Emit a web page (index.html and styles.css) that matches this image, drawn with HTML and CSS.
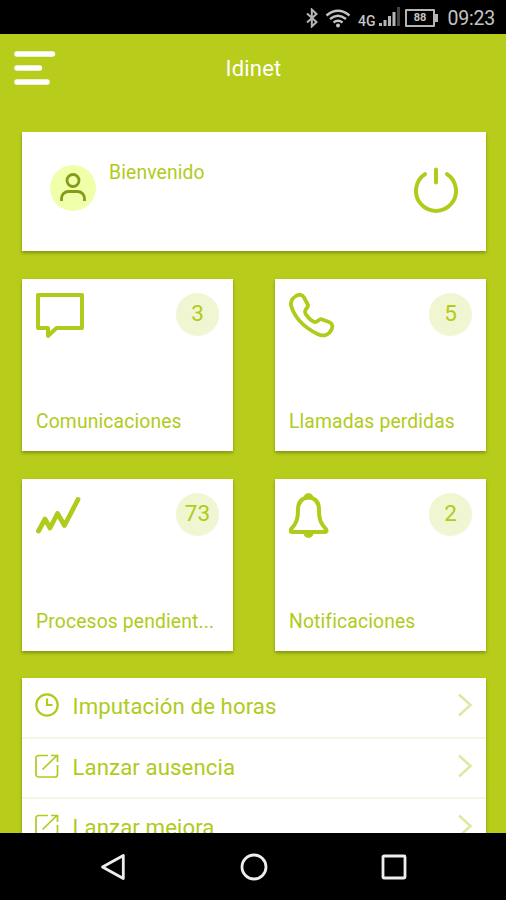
FILE: index.html
```html
<!DOCTYPE html>
<html lang="es">
<head>
<meta charset="utf-8">
<title>Idinet</title>
<link rel="stylesheet" href="styles.css">
</head>
<body>
<div class="phone">
  <div class="status">
    <svg class="bluetooth" width="14" height="20" viewBox="0 0 14 20"><path d="M2 5.500l9.500 8.500-4.700 4.500v-17L11.500 6 2 14.500"/></svg>
    <svg class="wifi" width="26" height="19" viewBox="0 0 26 19"><path d="M1.500 6.500Q13-3 24.500 6.500M5 10Q13 3.500 21 10M8.500 13.500Q13 10 17.500 13.500"/><circle cx="13" cy="16.500" r="2"/></svg>
    <span class="network">4G</span>
    <svg class="signal" width="22" height="20" viewBox="0 0 22 20"><path d="M0 16h3v3H0zM4.500 13h3v6h-3zM9 9h3v10H9zM13.500 5h3v14h-3z"/><path class="weak" d="M18 0h3v19h-3z"/></svg>
    <span class="battery">88</span>
    <span class="time">09:23</span>
  </div>

  <header class="header">
    <svg class="menu" width="42" height="34" viewBox="0 0 42 34"><path d="M3 3H38.500M3 17H25.500M3 31H33"/></svg>
    <h1 class="title">Idinet</h1>
  </header>

  <main class="content">
    <section class="card welcome">
      <div class="avatar"><svg width="28" height="30" viewBox="0 0 28 30"><circle cx="14" cy="7.500" r="6"/><path d="M2.500 28v-2.500a7 7 0 0 1 7-7h9a7 7 0 0 1 7 7V28"/></svg></div>
      <span class="greeting">Bienvenido</span>
      <svg class="power" width="46" height="46" viewBox="0 0 46 46"><path d="M12 7.200a20 20 0 1 0 22 0M23 2.500v13"/></svg>
    </section>

    <div class="tiles">
      <section class="card tile">
        <div class="tile-top"><svg class="icon" width="48" height="46" viewBox="0 0 48 46"><path d="M2 2h44v33H20.500L12 43v-8H2z"/></svg><span class="badge">3</span></div>
        <span class="label">Comunicaciones</span>
      </section>
      <section class="card tile">
        <div class="tile-top"><svg class="icon phone-icon" width="48" height="46" viewBox="0 0 48 46"><path d="M7 3C10 1 13.500 1.500 15 4.500l4 7.500c1 2-3 3.500-3 6.500 0 3.500 7 10.500 10.500 10.500 3 0 3.500-3.500 6-2.700l7.500 2.700c3.500 1.300 4 4.500 2.500 7.500-2.500 5.500-8 7.500-14 4.500C15.500 34.500 6.500 26 2.500 14 1 9.500 3 5.500 7 3z"/></svg><span class="badge">5</span></div>
        <span class="label">Llamadas perdidas</span>
      </section>
      <section class="card tile">
        <div class="tile-top"><svg class="icon chart" width="48" height="46" viewBox="0 0 48 46"><path d="M2.500 38L9 26l5 9 7.500-14.500 7 12L42 6.500"/></svg><span class="badge">73</span></div>
        <span class="label">Procesos pendient...</span>
      </section>
      <section class="card tile">
        <div class="tile-top"><svg class="icon" width="48" height="46" viewBox="0 0 48 46"><path d="M19.500 4.500C12 5 9 10 9 17c0 12-3.500 15-6.500 18.500-2 2.500-.8 3.500 1.200 3.500h31.600c2 0 3.200-1 1.200-3.500C33.500 32 30 29 30 17c0-7-3-12-10.500-12.500z"/><path class="solid" d="M14.500 5.500a5 5.500 0 0 1 10 0M14.500 40a5 5 0 0 0 10 0z"/></svg><span class="badge">2</span></div>
        <span class="label">Notificaciones</span>
      </section>
    </div>

    <ul class="card actions">
      <li class="action"><svg class="small-icon clock" width="24" height="24" viewBox="0 0 24 24"><circle cx="12" cy="12" r="10.700"/><path d="M12 5.500V12h5.500"/></svg><span class="action-label">Imputación de horas</span><svg class="chevron" width="16" height="24" viewBox="0 0 16 24"><path d="M2 1.500L13.500 12 2 22.500"/></svg></li>
      <li class="action"><svg class="small-icon" width="24" height="24" viewBox="0 0 24 24"><path d="M13 1.500H3.500A2.500 2.500 0 0 0 1 4v16.500A2.500 2.500 0 0 0 3.500 23h16.500a2.500 2.500 0 0 0 2.500-2.500V11M7.500 15.500L22 1.500M16 1.500h6.500V8"/></svg><span class="action-label">Lanzar ausencia</span><svg class="chevron" width="16" height="24" viewBox="0 0 16 24"><path d="M2 1.500L13.500 12 2 22.500"/></svg></li>
      <li class="action"><svg class="small-icon" width="24" height="24" viewBox="0 0 24 24"><path d="M13 1.500H3.500A2.500 2.500 0 0 0 1 4v16.500A2.500 2.500 0 0 0 3.500 23h16.500a2.500 2.500 0 0 0 2.500-2.500V11M7.500 15.500L22 1.500M16 1.500h6.500V8"/></svg><span class="action-label">Lanzar mejora</span><svg class="chevron" width="16" height="24" viewBox="0 0 16 24"><path d="M2 1.500L13.500 12 2 22.500"/></svg></li>
    </ul>
  </main>

  <nav class="navbar">
    <svg width="28" height="28" viewBox="0 0 28 28"><path d="M24.300 2.500v23L3.500 14z"/></svg>
    <svg width="28" height="28" viewBox="0 0 28 28"><circle cx="14" cy="14" r="12"/></svg>
    <svg width="28" height="28" viewBox="0 0 28 28"><rect x="3" y="3" width="22" height="22" rx="1"/></svg>
  </nav>
</div>
</body>
</html>
```
FILE: styles.css
```css
* { box-sizing: border-box; }
body { margin: 0; font-family: Roboto, "Liberation Sans", sans-serif; background: #000; }
svg { display: block; flex: none; fill: none; }
.phone { width: 506px; height: 900px; display: flex; flex-direction: column; overflow: hidden; background: #b8cc1b; color: #b0cb1b; }

.status { height: 34px; flex: none; display: flex; align-items: center; padding: 2px 11px 0 305px; background: #000; color: #c4c4c4; }
.bluetooth { stroke: #b5b5b5; stroke-width: 2; }
.wifi { margin-left: 6px; stroke: #c4c4c4; stroke-width: 2.400; }
.wifi circle { fill: #c4c4c4; stroke: none; }
.network { width: 19px; margin: 6px 0 0 7px; font-size: 14px; font-weight: 500; line-height: 16px; }
.signal { margin: -2px 0 0 2px; fill: #b5b5b5; }
.signal .weak { fill: #444; }
.battery { position: relative; width: 30px; height: 18px; margin-left: 4px; border: 2px solid #b5b5b5; border-radius: 1px; font-size: 11px; font-weight: 700; line-height: 14px; text-align: center; }
.battery::after { content: ""; position: absolute; left: 28px; top: 3px; width: 3px; height: 8px; background: #b5b5b5; }
.time { margin: 2px 0 0 auto; font-size: 19.500px; line-height: 24px; letter-spacing: -0.2px; white-space: nowrap; }

.header { height: 98px; flex: none; display: grid; grid-template-columns: 100px 1fr 100px; padding-top: 17px; color: #fff; }
.menu { margin-left: 14px; stroke: #fff; stroke-width: 5.500; stroke-linecap: round; }
.title { margin: 4px 0 0 1px; font-size: 22px; font-weight: 400; line-height: 28px; letter-spacing: .2px; text-align: center; }

.content { flex: 1; min-height: 0; padding: 0 20px 0 22px; overflow: hidden; }
.card { background: #fff; box-shadow: 0 2px 3px rgba(80, 95, 0, .5); }
.welcome { height: 119px; display: flex; padding: 0 27px 0 28px; }
.avatar { width: 46px; height: 46px; margin-top: 33px; border-radius: 50%; background: #efffaa; display: grid; place-items: center; }
.avatar svg { stroke: #849a19; stroke-width: 2.800; }
.greeting { margin: 29px 0 0 13px; font-size: 19.300px; line-height: 24px; letter-spacing: .15px; }
.power { margin: 35px 0 0 auto; stroke: #b0cb1b; stroke-width: 4; stroke-linecap: round; }

.tiles { display: grid; grid-template-columns: 211px 211px; justify-content: space-between; row-gap: 28px; margin: 28px 0 27px; }
.tile { height: 172px; display: flex; flex-direction: column; justify-content: space-between; padding: 14px 14px 17px; }
.tile-top { display: flex; justify-content: space-between; }
.icon { stroke: #b0cb1b; stroke-width: 4; stroke-linejoin: round; stroke-linecap: round; }
.phone-icon { stroke-width: 3.800; }
.chart { stroke-width: 4.800; }
.solid { fill: #b0cb1b; stroke: none; }
.badge { width: 43px; height: 43px; border-radius: 50%; background: #f0f5d2; font-size: 22.500px; line-height: 40px; text-align: center; }
.label { font-size: 19.300px; line-height: 24px; white-space: nowrap; letter-spacing: .15px; }

.actions { list-style: none; margin: 0; padding: 0; }
.action { height: 60.500px; display: flex; padding: 15px 13px 0; border-bottom: 2px solid #f4f8e0; }
.small-icon { stroke: #b0cb1b; stroke-width: 1.700; }
.clock { stroke-width: 2.200; }
.action-label { margin-left: 13.500px; font-size: 22.200px; line-height: 27px; letter-spacing: .1px; }
.chevron { margin-left: auto; stroke: #dce9a0; stroke-width: 2.500; }

.navbar { height: 67px; flex: none; display: flex; justify-content: space-between; align-items: center; padding: 0 98px 0 99px; background: #000; }
.navbar svg { stroke: #eee; stroke-width: 2.800; stroke-linejoin: round; }
```
